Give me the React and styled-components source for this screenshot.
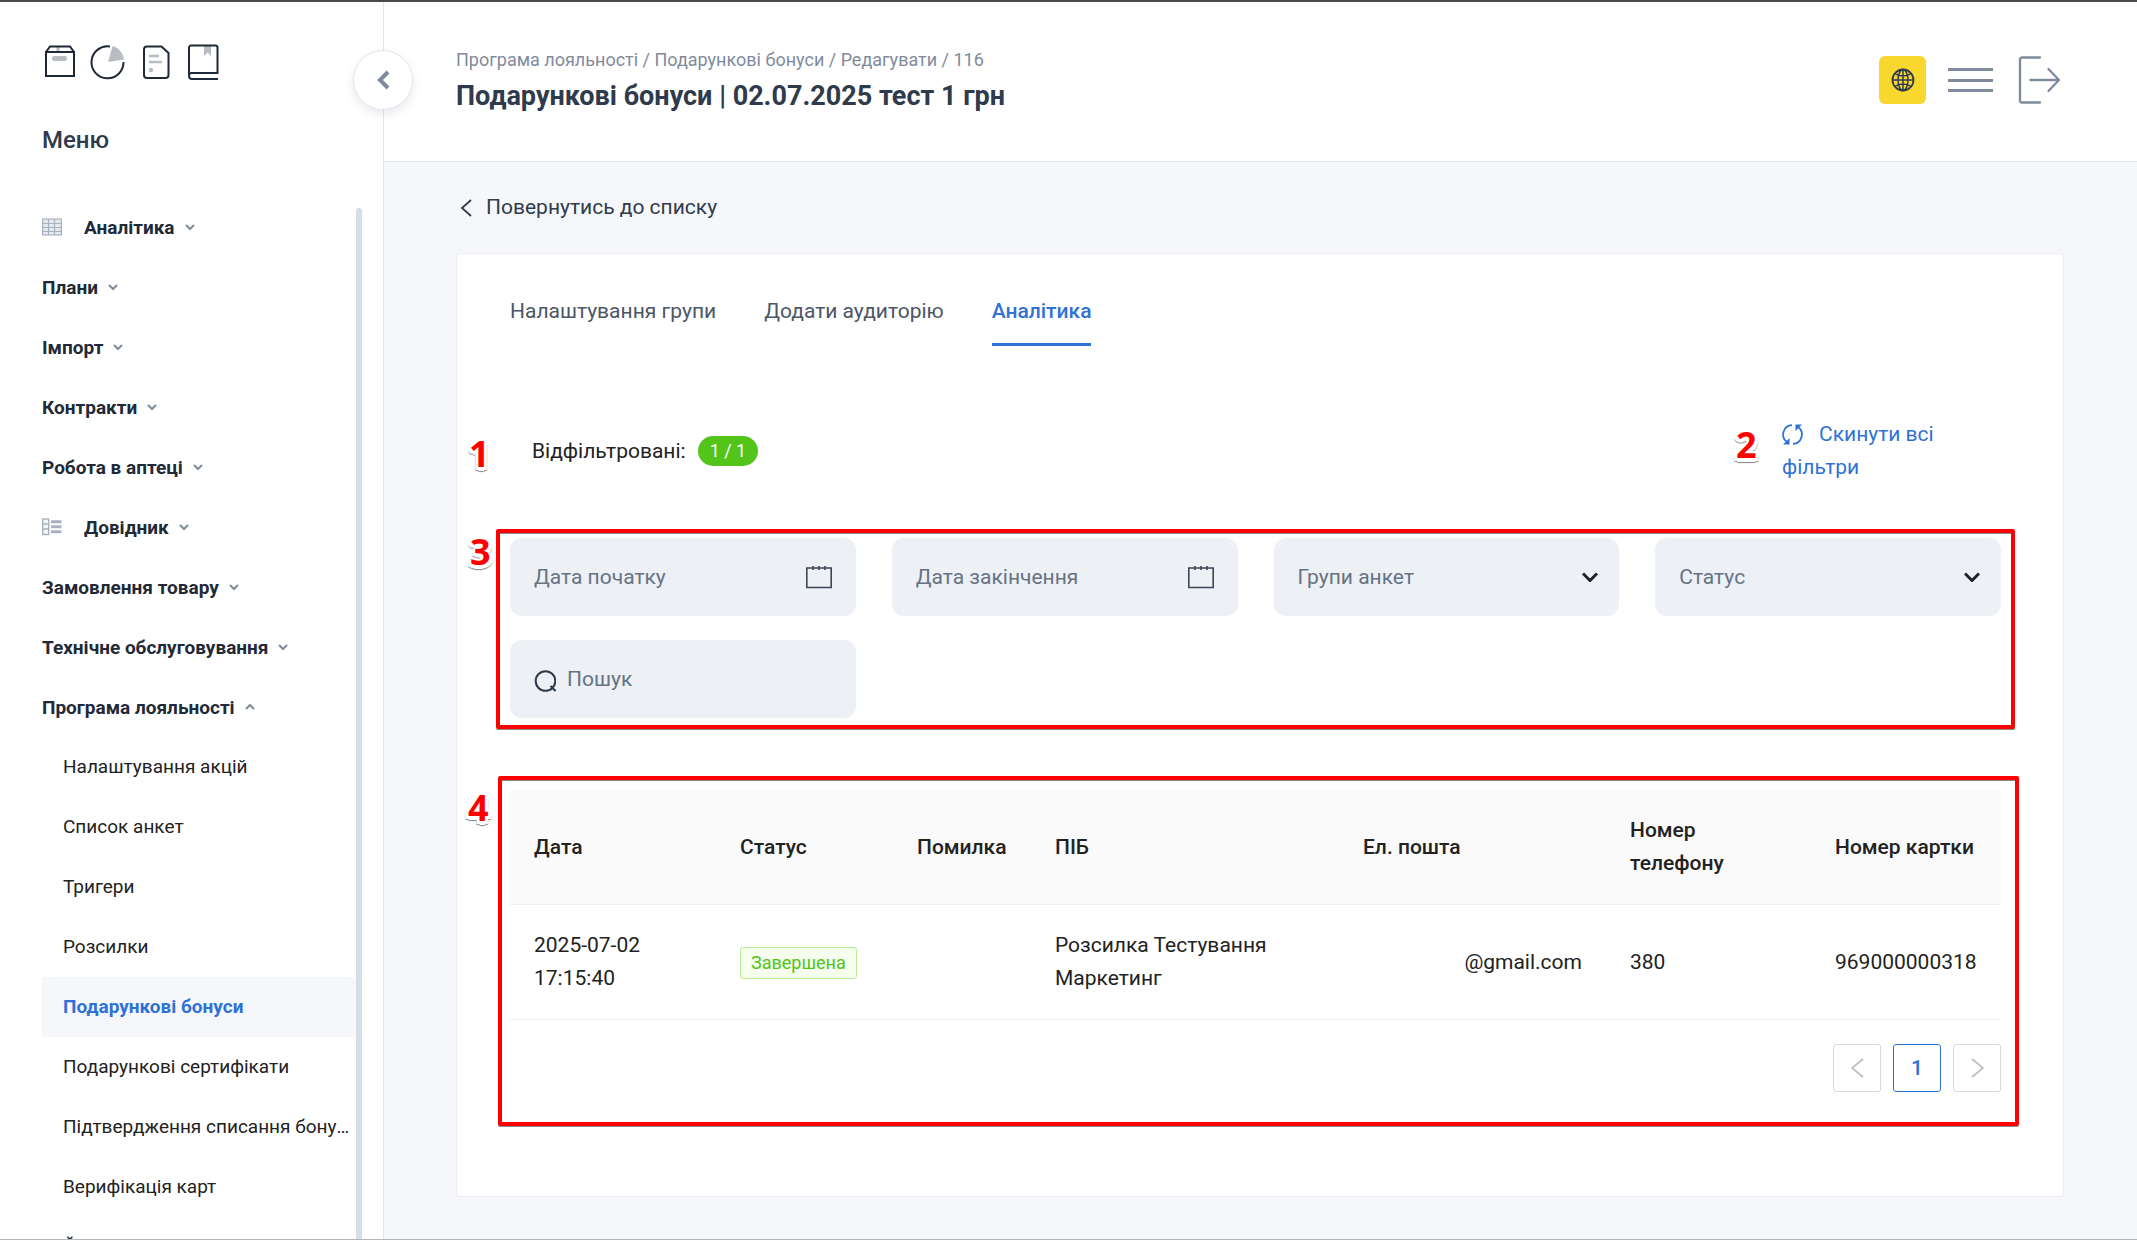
import React from "react";
import styled, { createGlobalStyle, css } from "styled-components";

const GlobalStyle = createGlobalStyle`
  *, *::before, *::after { box-sizing: border-box; }
  body {
    margin: 0;
    background: #f5f7fb;
    color: #222;
    font-family: Roboto, "Noto Sans", sans-serif;
    font-size: 21px;
    line-height: 33px;
  }
  button, input, select { font: inherit; color: inherit; }
`;

const ink = "#1f2937";
const slate = "#2f3b4c";
const muted = "#7f8b9c";
const blue = "#2f72d6";
const line = "#e2e6ed";

const Shell = styled.div`
  display: grid;
  grid-template-columns: 384px minmax(0, 1fr);
  height: 100vh;
  overflow: hidden;
  border-top: 2px solid #4a4a4c;
  border-bottom: 1px solid #b3b6bd;
`;

const Sidebar = styled.aside`
  position: relative;
  display: flex;
  flex-direction: column;
  min-height: 0;
  padding: 41px 21px 0 42px;
  background: #fff;
  border-right: 1px solid ${line};
`;

const Shortcuts = styled.div`
  display: flex;
  align-items: center;
  gap: 14px;
`;

const ShortcutButton = styled.button`
  display: block;
  padding: 0;
  border: 0;
  background: none;
  svg { display: block; }
`;

const MenuTitle = styled.h2`
  margin: 43px 0 0;
  color: ${slate};
  font-size: 24px;
  font-weight: 500;
  line-height: 32px;
`;

const CollapseButton = styled.button`
  position: absolute;
  top: 48px;
  right: -30px;
  z-index: 2;
  display: grid;
  place-items: center;
  width: 60px;
  height: 60px;
  padding: 0;
  border: 1px solid ${line};
  border-radius: 50%;
  background: #fff;
  box-shadow: 0 4px 10px rgba(30, 50, 80, 0.1);
`;

const MenuArea = styled.div`
  display: flex;
  flex: 1;
  min-height: 0;
  margin-top: 41px;
`;

const MenuList = styled.nav`
  flex: 1;
  min-width: 0;
  overflow: hidden;
`;

const ScrollThumb = styled.div`
  width: 6px;
  margin-top: 11px;
  border-radius: 3px 3px 0 0;
  background: #d5dde5;
`;

const MenuGroup = styled.button`
  display: flex;
  align-items: center;
  width: 100%;
  height: 60px;
  padding: 0;
  border: 0;
  background: none;
  color: ${ink};
  font-size: 19px;
  font-weight: 700;
  text-align: left;
`;

const GroupIcon = styled.span`
  width: 42px;
  svg { display: block; }
`;

const GroupArrow = styled.span`
  margin-left: 10px;
  svg { display: block; }
`;

const MenuLink = styled.a`
  display: block;
  height: 60px;
  padding-left: 21px;
  overflow: hidden;
  color: #222;
  font-size: 19px;
  line-height: 60px;
  text-decoration: none;
  text-overflow: ellipsis;
  white-space: nowrap;
  ${(p) => p.$active && css`
    background: #f5f7fb;
    color: ${blue};
    font-weight: 700;
  `}
`;

const Main = styled.main`
  min-width: 0;
`;

const Header = styled.header`
  display: flex;
  align-items: center;
  justify-content: space-between;
  height: 160px;
  padding: 0 73px 3px 72px;
  background: #fff;
  border-bottom: 1px solid ${line};
`;

const Breadcrumbs = styled.nav`
  color: ${muted};
  font-size: 18px;
  line-height: 28px;
  a { color: inherit; text-decoration: none; }
`;

const PageTitle = styled.h1`
  margin: 4px 0 0;
  color: ${slate};
  font-size: 27px;
  font-weight: 700;
  line-height: 36px;
`;

const HeaderActions = styled.div`
  display: flex;
  align-items: center;
  gap: 22px;
`;

const IconButton = styled.button`
  display: grid;
  place-items: center;
  height: 48px;
  padding: 0;
  border: 0;
  background: none;
`;

const LanguageButton = styled(IconButton)`
  width: 47px;
  border-radius: 6px;
  background: #f8d82e;
`;

const Content = styled.div`
  padding: 29px 73px 42px 72px;
`;

const BackLink = styled.a`
  display: flex;
  align-items: center;
  gap: 14px;
  width: fit-content;
  padding-left: 4px;
  color: ${slate};
  text-decoration: none;
`;

const Card = styled.section`
  margin-top: 29px;
  padding: 38px 62px 104px 53px;
  border: 1px solid #eceef2;
  border-radius: 3px;
  background: #fff;
`;

const Tabs = styled.div`
  display: flex;
  gap: 48px;
`;

const Tab = styled.button`
  padding: 3px 0 15px;
  border: 0;
  border-bottom: 3px solid ${(p) => (p.$active ? blue : "transparent")};
  background: none;
  color: ${(p) => (p.$active ? blue : "#4b5666")};
  font-weight: ${(p) => (p.$active ? 500 : 400)};
`;

const Summary = styled.div`
  display: flex;
  align-items: center;
  justify-content: space-between;
  margin-top: 72px;
  padding: 0 22px;
`;

const Counter = styled.div`
  position: relative;
  display: flex;
  align-items: center;
  gap: 12px;
`;

const CountBadge = styled.span`
  padding: 0 12px;
  border-radius: 15px;
  background: #52c41a;
  color: #fff;
  font-size: 18px;
  line-height: 30px;
`;

const ResetWrap = styled.div`
  position: relative;
  width: 197px;
`;

const ResetButton = styled.button`
  padding: 0;
  border: 0;
  background: none;
  color: ${blue};
  text-align: left;
  svg { margin-right: 16px; vertical-align: -4px; }
`;

const Filters = styled.form`
  position: relative;
  display: grid;
  grid-template-columns: repeat(4, minmax(0, 1fr));
  gap: 24px 36px;
  margin-top: 54px;
`;

const Field = styled.label`
  display: flex;
  align-items: center;
  gap: 11px;
  height: 78px;
  padding: 0 ${(p) => (p.$select ? "21px" : "24px")} 0 24px;
  border-radius: 12px;
  background: #edf0f5;
  svg { flex: none; }
`;

const control = css`
  flex: 1;
  min-width: 0;
  padding: 0;
  border: 0;
  outline: 0;
  background: none;
  color: #667383;
`;

const TextInput = styled.input`
  ${control}
  &::placeholder { color: #667383; opacity: 1; }
`;

const Select = styled.select`
  ${control}
  appearance: none;
`;

const TableSection = styled.div`
  position: relative;
  margin-top: 72px;
`;

const Table = styled.table`
  width: 100%;
  border-collapse: separate;
  border-spacing: 0;
  table-layout: fixed;
  text-align: left;
`;

const HeadCell = styled.th`
  width: ${(p) => p.$width};
  padding: 24px;
  border-bottom: 1px solid #f0f0f0;
  background: #fafafa;
  font-weight: 500;
  &:first-child { border-top-left-radius: 3px; }
  &:last-child { border-top-right-radius: 3px; }
`;

const Cell = styled.td`
  padding: 24px;
  border-bottom: 1px solid #f0f0f0;
  text-align: ${(p) => p.$align || "left"};
`;

const StatusTag = styled.span`
  display: inline-block;
  padding: 0 10px;
  border: 1px solid #b7eb8f;
  border-radius: 3px;
  background: #f6ffed;
  color: #52c41a;
  font-size: 18px;
  line-height: 30px;
  vertical-align: middle;
`;

const Pagination = styled.nav`
  display: flex;
  justify-content: flex-end;
  gap: 12px;
  margin-top: 24px;
`;

const PageButton = styled.button`
  display: grid;
  place-items: center;
  width: 48px;
  height: 48px;
  padding: 0;
  border: 1px solid ${(p) => (p.$current ? blue : "#d9d9d9")};
  border-radius: 3px;
  background: #fff;
  color: ${(p) => (p.$current ? blue : "#bfbfbf")};
  font-weight: 500;
`;

const Outline = styled.div`
  position: absolute;
  inset: ${(p) => p.$inset};
  border: 4px solid #f00;
  border-radius: 2px;
  box-shadow: 0 1px 0 #888, inset 0 1px 0 #888;
  pointer-events: none;
`;

const Marker = styled.span`
  position: absolute;
  top: ${(p) => p.$top};
  left: ${(p) => p.$left};
  color: #f00;
  font-family: "Open Sans", "Noto Sans", sans-serif;
  font-size: 36px;
  font-weight: 700;
  line-height: 40px;
  text-shadow: 2px 0 #fff, -2px 0 #fff, 0 2px #fff, 0 -2px #fff, 3px 3px #fff, -3px 3px #fff,
    0 4px #fff, 3px 4px 1px #888, -3px 4px 1px #888, 0 5px 1px #888;
`;

const BoxIcon = () => (
  <svg width="34" height="38" viewBox="0 0 34 38" fill="none">
    <path d="M14.500 4h3v5h-3z" fill="#b9bdc3" />
    <rect x="10" y="13" width="15" height="5" rx="2" fill="#b9bdc3" />
    <path d="M4 9h28v24H4zM4 9l4-5.500h20L32 9" stroke={ink} strokeWidth="2" />
  </svg>
);

const PieIcon = () => (
  <svg width="36" height="38" viewBox="0 0 36 38" fill="none">
    <path d="M20 3.500a16 16 0 1 0 13.500 15.500" stroke={ink} strokeWidth="2" />
    <path d="M22.500 3c6 1.500 10.500 7 11.500 13.500L18 19z" fill="#b9bdc3" />
  </svg>
);

const DocIcon = () => (
  <svg width="32" height="38" viewBox="0 0 32 38" fill="none">
    <path d="M7 3.500h14.500l7 6.500v22a3 3 0 0 1-3 3H7a3 3 0 0 1-3-3V6.500a3 3 0 0 1 3-3z" stroke={ink} strokeWidth="2" />
    <path d="M9 13h10M9 19h13" stroke="#b9bdc3" strokeWidth="2.500" />
    <circle cx="11" cy="27" r="2.200" fill="#b9bdc3" />
  </svg>
);

const BookIcon = () => (
  <svg width="34" height="38" viewBox="0 0 34 38" fill="none">
    <path d="M18 3h7v10l-3.500-3.500L18 13z" fill="#b9bdc3" />
    <path d="M32 36H6a3 3 0 0 1-3-3V4.500a2 2 0 0 1 2-2h24.500a2 2 0 0 1 2 2V30H5.500A2.500 2.500 0 0 0 3 32.500" stroke={ink} strokeWidth="2" />
  </svg>
);

const GridIcon = () => (
  <svg width="20" height="18" viewBox="0 0 20 18" fill="none" stroke="#a9b1c1" strokeWidth="1.200">
    <rect x=".6" y="1" width="18.800" height="16" fill="#e6e9ef" />
    <path d="M.6 5.500h18.800M.6 9.500h18.800M.6 13.500h18.800M6.500 1v16M12.500 1v16" />
  </svg>
);

const ListIcon = () => (
  <svg width="20" height="18" viewBox="0 0 20 18" fill="none" stroke="#a9b1c1" strokeWidth="1.400">
    <rect x=".7" y="1" width="6" height="15.500" fill="#f4f5f8" />
    <path d="M.6 6h6M.6 11h6" />
    <path d="M9 3.800h10.500M9 8.800h10.500M9 13.800h10.500" strokeWidth="3" />
  </svg>
);

const SmallArrow = ({ up }) => (
  <svg width="10" height="8" viewBox="0 0 10 8" fill="none" stroke={muted} strokeWidth="2">
    <path d={up ? "M1 6l4-4 4 4" : "M1 2l4 4 4-4"} />
  </svg>
);

const CollapseIcon = () => (
  <svg width="14" height="20" viewBox="0 0 14 20" fill="none" stroke={muted} strokeWidth="4">
    <path d="M12 2L4 10l8 8" />
  </svg>
);

const GlobeIcon = () => (
  <svg width="24" height="24" viewBox="0 0 24 24" fill="none" stroke={slate} strokeWidth="1.500">
    <circle cx="12" cy="12" r="10.500" strokeWidth="1.800" />
    <ellipse cx="12" cy="12" rx="5" ry="10.500" />
    <path d="M12 1.500v21M1.500 12h21M4 5.500c4 3.200 12 3.200 16 0M4 18.500c4-3.200 12-3.200 16 0" />
  </svg>
);

const BurgerIcon = () => (
  <svg width="45" height="24" viewBox="0 0 45 24" stroke={muted} strokeWidth="3">
    <path d="M0 1.500h45M0 12.500h45M0 22.500h45" />
  </svg>
);

const ExitIcon = () => (
  <svg width="49" height="48" viewBox="0 0 49 48" fill="none" stroke={muted} strokeWidth="2.300" strokeLinecap="round" strokeLinejoin="round">
    <path d="M25 1.500H7a2 2 0 0 0-2 2v41a2 2 0 0 0 2 2H25M15.500 24h28M33.500 13l10.500 11-10.500 11" />
  </svg>
);

const BackIcon = () => (
  <svg width="12" height="18" viewBox="0 0 12 18" fill="none" stroke={slate} strokeWidth="1.800">
    <path d="M11 1L2 9l9 8" />
  </svg>
);

const CalendarIcon = () => (
  <svg width="26" height="24" viewBox="0 0 26 24" fill="none" stroke="#3b4657" strokeWidth="1.600">
    <path d="M.8 3h24.400v19.500H.8z" />
    <path d="M7 1v4M13 1v4M19 1v4" />
  </svg>
);

const SelectArrow = () => (
  <svg width="16" height="10" viewBox="0 0 16 10" fill="none" stroke="#1f2328" strokeWidth="3">
    <path d="M1 1.500l7 7 7-7" />
  </svg>
);

const SearchIcon = () => (
  <svg width="22" height="26" viewBox="0 0 22 26" fill="none" stroke={slate} strokeWidth="2">
    <circle cx="11.500" cy="15" r="9.800" />
    <path d="M16.500 20l5 5" />
  </svg>
);

const ResetIcon = () => (
  <svg width="21" height="21" viewBox="0 0 21 21" fill="none" stroke={blue} strokeWidth="1.800">
    <path d="M10 1.200A9.300 9.300 0 0 0 5 18M11 19.800A9.300 9.300 0 0 0 16 3" />
    <path d="M13.500.5h6.500l-6.500 6.500zM7.500 20.500H1l6.500-6.500z" fill={blue} stroke="none" />
  </svg>
);

const PagerArrow = ({ next }) => (
  <svg width="13" height="20" viewBox="0 0 13 20" fill="none" stroke="currentColor" strokeWidth="1.800">
    <path d={next ? "M1 1l11 9-11 9" : "M12 1L1 10l11 9"} />
  </svg>
);

const groups = [
  { label: "Аналітика", icon: <GridIcon /> },
  { label: "Плани" },
  { label: "Імпорт" },
  { label: "Контракти" },
  { label: "Робота в аптеці" },
  { label: "Довідник", icon: <ListIcon /> },
  { label: "Замовлення товару" },
  { label: "Технічне обслуговування" },
  { label: "Програма лояльності", open: true },
];

const links = [
  "Налаштування акцій",
  "Список анкет",
  "Тригери",
  "Розсилки",
  "Подарункові бонуси",
  "Подарункові сертифікати",
  "Підтвердження списання бонусів",
  "Верифікація карт",
  "Й",
];

const shortcuts = [
  ["Товари", <BoxIcon />],
  ["Звіти", <PieIcon />],
  ["Документи", <DocIcon />],
  ["Довідка", <BookIcon />],
];

const columns = [
  ["Дата", "206px"],
  ["Статус", "177px"],
  ["Помилка", "138px"],
  ["ПІБ", "auto"],
  ["Ел. пошта", "267px"],
  ["Номер телефону", "205px"],
  ["Номер картки", "190px"],
];

export default function App() {
  return (
    <>
      <GlobalStyle />
      <Shell>
        <Sidebar>
          <Shortcuts>
            {shortcuts.map(([name, icon]) => (
              <ShortcutButton key={name} aria-label={name}>{icon}</ShortcutButton>
            ))}
          </Shortcuts>
          <CollapseButton aria-label="Згорнути меню"><CollapseIcon /></CollapseButton>
          <MenuTitle>Меню</MenuTitle>
          <MenuArea>
            <MenuList>
              {groups.map((g) => (
                <MenuGroup key={g.label} aria-expanded={!!g.open}>
                  {g.icon && <GroupIcon>{g.icon}</GroupIcon>}
                  {g.label}
                  <GroupArrow><SmallArrow up={g.open} /></GroupArrow>
                </MenuGroup>
              ))}
              {links.map((label) => (
                <MenuLink key={label} href="#" $active={label === "Подарункові бонуси"}>{label}</MenuLink>
              ))}
            </MenuList>
            <ScrollThumb />
          </MenuArea>
        </Sidebar>
        <Main>
          <Header>
            <div>
              <Breadcrumbs>
                <a href="#">Програма лояльності</a> / <a href="#">Подарункові бонуси</a> / <a href="#">Редагувати</a> / 116
              </Breadcrumbs>
              <PageTitle>Подарункові бонуси | 02.07.2025 тест 1 грн</PageTitle>
            </div>
            <HeaderActions>
              <LanguageButton aria-label="Мова"><GlobeIcon /></LanguageButton>
              <IconButton aria-label="Меню"><BurgerIcon /></IconButton>
              <IconButton aria-label="Вийти"><ExitIcon /></IconButton>
            </HeaderActions>
          </Header>
          <Content>
            <BackLink href="#"><BackIcon />Повернутись до списку</BackLink>
            <Card>
              <Tabs role="tablist">
                <Tab role="tab">Налаштування групи</Tab>
                <Tab role="tab">Додати аудиторію</Tab>
                <Tab role="tab" aria-selected $active>Аналітика</Tab>
              </Tabs>
              <Summary>
                <Counter>
                  <Marker $top="-1px" $left="-63px">1</Marker>
                  Відфільтровані:
                  <CountBadge>1 / 1</CountBadge>
                </Counter>
                <ResetWrap>
                  <Marker $top="7px" $left="-46px">2</Marker>
                  <ResetButton type="button"><ResetIcon />Скинути всі фільтри</ResetButton>
                </ResetWrap>
              </Summary>
              <Filters>
                <Field>
                  <TextInput aria-label="Дата початку" placeholder="Дата початку" />
                  <CalendarIcon />
                </Field>
                <Field>
                  <TextInput aria-label="Дата закінчення" placeholder="Дата закінчення" />
                  <CalendarIcon />
                </Field>
                <Field $select>
                  <Select aria-label="Групи анкет"><option>Групи анкет</option></Select>
                  <SelectArrow />
                </Field>
                <Field $select>
                  <Select aria-label="Статус"><option>Статус</option></Select>
                  <SelectArrow />
                </Field>
                <Field>
                  <SearchIcon />
                  <TextInput type="search" aria-label="Пошук" placeholder="Пошук" />
                </Field>
                <Outline $inset="-9px -14px -11px" />
                <Marker $top="-6px" $left="-40px">3</Marker>
              </Filters>
              <TableSection>
                <Table>
                  <thead>
                    <tr>
                      {columns.map(([name, width]) => (
                        <HeadCell key={name} $width={width}>{name}</HeadCell>
                      ))}
                    </tr>
                  </thead>
                  <tbody>
                    <tr>
                      <Cell>2025-07-02 17:15:40</Cell>
                      <Cell><StatusTag>Завершена</StatusTag></Cell>
                      <Cell />
                      <Cell>Розсилка Тестування Маркетинг</Cell>
                      <Cell $align="right">@gmail.com</Cell>
                      <Cell>380</Cell>
                      <Cell>969000000318</Cell>
                    </tr>
                  </tbody>
                </Table>
                <Pagination>
                  <PageButton aria-label="Попередня"><PagerArrow /></PageButton>
                  <PageButton $current>1</PageButton>
                  <PageButton aria-label="Наступна"><PagerArrow next /></PageButton>
                </Pagination>
                <Outline $inset="-14px -18px -34px -12px" />
                <Marker $top="-2px" $left="-42px">4</Marker>
              </TableSection>
            </Card>
          </Content>
        </Main>
      </Shell>
    </>
  );
}
